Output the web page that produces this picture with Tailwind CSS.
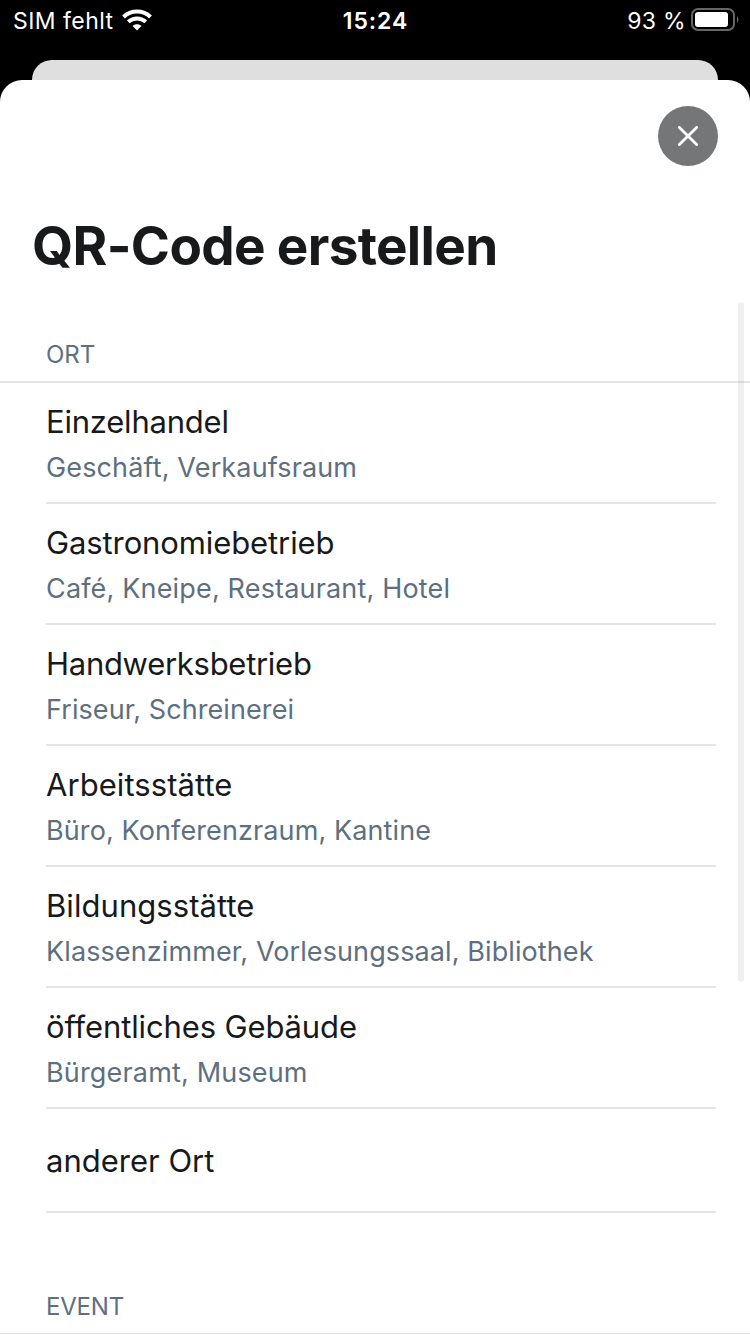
<!DOCTYPE html>
<html lang="de"><head><meta charset="utf-8"><title>QR-Code erstellen</title>
<script src="https://cdn.jsdelivr.net/npm/@tailwindcss/browser@4"></script></head>
<body class="bg-black font-['Inter','Liberation_Sans',sans-serif]">
<div class="relative flex h-[1334px] w-[750px] flex-col overflow-hidden">
<header class="grid h-[60px] shrink-0 grid-cols-3 items-start text-white">
<div class="flex h-[42px] items-center pl-[13px] text-[23px] tracking-[0.45px]"><span class="w-[109px] whitespace-nowrap">SIM fehlt</span>
<svg class="mb-0.5 h-[22px] w-[30px]" viewBox="0 0 30 22" fill="none" stroke="white" stroke-width="4"><path d="M1.5 8C9 .8 21 .8 28.5 8M6.2 12.8C11.5 8.3 18.5 8.3 23.8 12.8"/><path d="M10.5 17C13 14.7 17 14.7 19.5 17L15 21.5Z" fill="white" stroke="none"/></svg></div>
<div class="flex h-[42px] items-center justify-center pl-px text-[23px] font-semibold tracking-[0.9px]">15:24</div>
<div class="flex h-[42px] items-center justify-end pr-[11px] text-[23px] tracking-[0.3px]"><span class="mr-[5px]">93 %</span><svg class="mb-0.5 h-6 w-12" viewBox="0 0 48 24"><rect x="1" y="1" width="42" height="21" rx="6" fill="none" stroke="#666" stroke-width="2"/><rect x="4" y="4" width="33" height="15" rx="3" fill="white"/><path d="M46 8q3 3.5 0 7z" fill="#666"/></svg></div>
</header>
<div class="mx-8 h-5 shrink-0 rounded-t-[20px] bg-[#dfdfdf]"></div>
<main class="flex flex-1 flex-col rounded-t-[22px] bg-white text-[#17191a]">
<div class="flex h-[86px] shrink-0 items-end justify-end pr-8"><button class="grid size-[60px] place-items-center rounded-full bg-[#757677]"><svg class="size-5" viewBox="0 0 20 20" stroke="white" stroke-width="2.8" stroke-linecap="round"><path d="M1.4 1.4L18.6 18.6M18.6 1.4L1.4 18.6"/></svg></button></div>
<h1 class="mt-[48px] ml-8 h-[64px] shrink-0 text-[53px] leading-[64px] font-bold tracking-[-0.65px]">QR-Code erstellen</h1>
<h2 class="mt-[58px] flex h-[47px] shrink-0 border-b-2 border-[#e5e5e5] pl-[46px] text-[24px] leading-[38px] text-[#5d6f80]">ORT</h2>
<ul class="mr-[34px] ml-[46px] text-[31px] leading-[40px] [&>li]:flex [&>li]:h-[121px] [&>li]:flex-col [&>li]:border-b-2 [&>li]:border-[#e5e5e5] [&>li]:pt-[19px] [&_p]:mt-[7px] [&_p]:text-[27px] [&_p]:leading-[38px] [&_p]:text-[#5d6f80]">
<li><h3 class="tracking-[-0.22px]">Einzelhandel</h3><p class="tracking-[0.14px]">Geschäft, Verkaufsraum</p></li>
<li><h3 class="tracking-[-0.11px]">Gastronomiebetrieb</h3><p class="tracking-[0.17px]">Café, Kneipe, Restaurant, Hotel</p></li>
<li><h3 class="tracking-[-0.28px]">Handwerksbetrieb</h3><p class="tracking-[0.08px]">Friseur, Schreinerei</p></li>
<li><h3 class="tracking-[0.06px]">Arbeitsstätte</h3><p class="tracking-[0.11px]">Büro, Konferenzraum, Kantine</p></li>
<li><h3 class="tracking-[0.06px]">Bildungsstätte</h3><p class="tracking-[0.1px]">Klassenzimmer, Vorlesungssaal, Bibliothek</p></li>
<li><h3 class="tracking-[-0.13px]">öffentliches Gebäude</h3><p class="tracking-[0.17px]">Bürgeramt, Museum</p></li>
</ul>
<div class="mr-[34px] ml-[46px] flex h-[104px] shrink-0 items-center border-b-2 border-[#e5e5e5] text-[31px]"><h3 class="pt-0.5">anderer Ort</h3></div>
<h2 class="mt-[74px] flex h-[48px] shrink-0 border-b-2 border-[#e5e5e5] pl-[46px] text-[24px] leading-[40px] tracking-[-0.2px] text-[#5d6f80]">EVENT</h2>
</main>
<div class="absolute top-[302px] left-[738px] h-[680px] w-[6px] rounded-full bg-black/6"></div>
</div></body></html>
